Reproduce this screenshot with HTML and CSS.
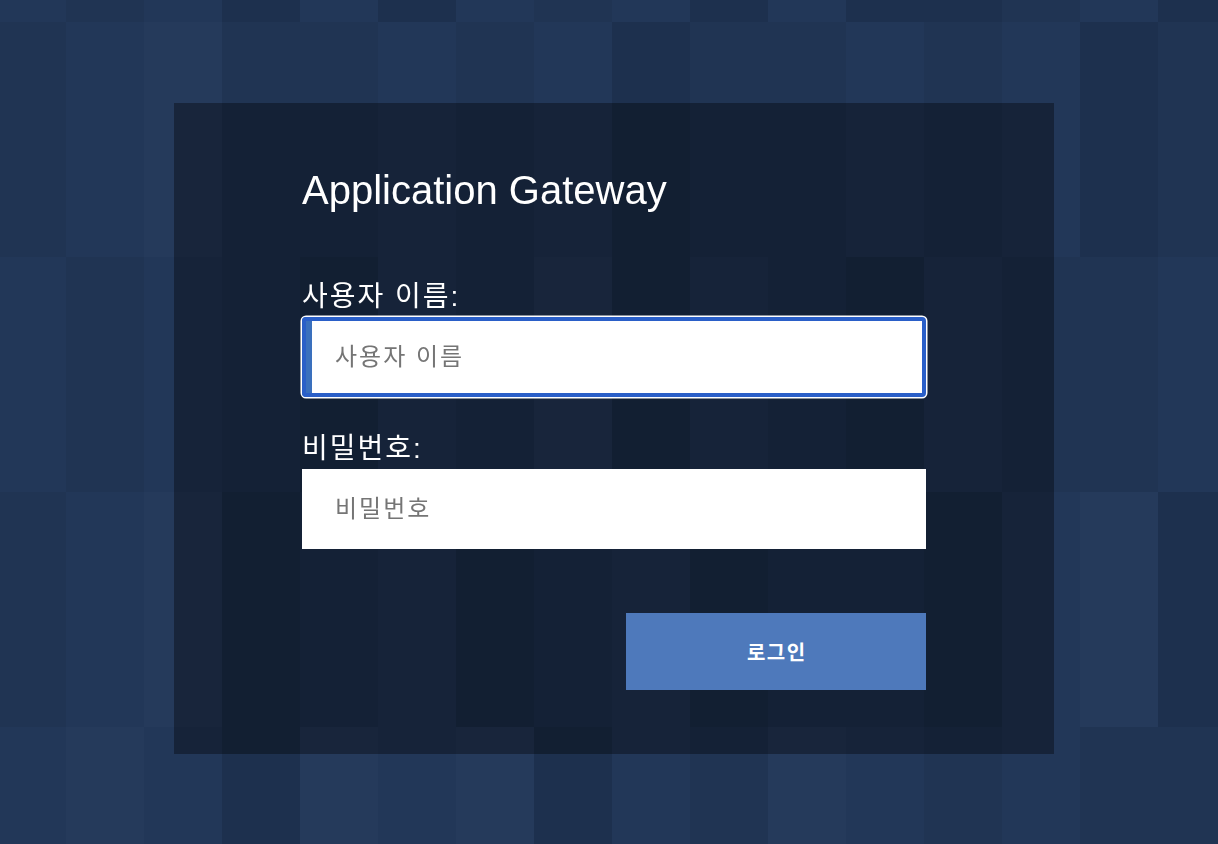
FILE: index.html
```html
<!DOCTYPE html>
<html lang="ko">
<head>
<meta charset="utf-8">
<title>Application Gateway</title>
<link rel="stylesheet" href="styles.css">
</head>
<body>
<div class="mosaic" aria-hidden="true">
  <div class="tile c"></div><div class="tile b"></div><div class="tile c"></div><div class="tile a"></div><div class="tile c"></div><div class="tile a"></div><div class="tile c"></div><div class="tile b"></div><div class="tile c"></div><div class="tile a"></div><div class="tile c"></div><div class="tile a"></div><div class="tile a"></div><div class="tile b"></div><div class="tile c"></div><div class="tile a"></div>
  <div class="tile b"></div><div class="tile c"></div><div class="tile d"></div><div class="tile b"></div><div class="tile b"></div><div class="tile c"></div><div class="tile b"></div><div class="tile c"></div><div class="tile a"></div><div class="tile b"></div><div class="tile b"></div><div class="tile c"></div><div class="tile b"></div><div class="tile c"></div><div class="tile a"></div><div class="tile b"></div>
  <div class="tile c"></div><div class="tile b"></div><div class="tile c"></div><div class="tile b"></div><div class="tile a"></div><div class="tile c"></div><div class="tile b"></div><div class="tile d"></div><div class="tile a"></div><div class="tile c"></div><div class="tile b"></div><div class="tile a"></div><div class="tile c"></div><div class="tile b"></div><div class="tile b"></div><div class="tile c"></div>
  <div class="tile b"></div><div class="tile c"></div><div class="tile d"></div><div class="tile a"></div><div class="tile b"></div><div class="tile c"></div><div class="tile a"></div><div class="tile b"></div><div class="tile c"></div><div class="tile a"></div><div class="tile b"></div><div class="tile b"></div><div class="tile a"></div><div class="tile c"></div><div class="tile d"></div><div class="tile a"></div>
  <div class="tile c"></div><div class="tile d"></div><div class="tile c"></div><div class="tile a"></div><div class="tile d"></div><div class="tile c"></div><div class="tile d"></div><div class="tile a"></div><div class="tile c"></div><div class="tile b"></div><div class="tile d"></div><div class="tile c"></div><div class="tile b"></div><div class="tile c"></div><div class="tile b"></div><div class="tile b"></div>
</div>

<main class="page">
  <form class="card" action="#" onsubmit="return false;">
    <h1 class="title">Application Gateway</h1>

    <div class="field">
      <label class="label" for="username">사용자 이름:</label>
      <input class="input is-focused" id="username" type="text" placeholder="사용자 이름">
    </div>

    <div class="field">
      <label class="label" for="password">비밀번호:</label>
      <input class="input" id="password" type="password" placeholder="비밀번호">
    </div>

    <div class="actions">
      <button class="btn" type="submit">로그인</button>
    </div>
  </form>
</main>
</body>
</html>
```

FILE: styles.css
```css
html, body {
  margin: 0;
  padding: 0;
  height: 100%;
  overflow: hidden;
}

body {
  background: #203453;
  font-family: "Liberation Sans", "Noto Sans CJK KR", sans-serif;
  color: #fff;
}

/* decorative tiled backdrop */
.mosaic {
  position: fixed;
  left: -12px;
  top: -213px;
  display: grid;
  grid-template-columns: repeat(16, 78px);
  grid-auto-rows: 235px;
  z-index: 0;
}

.tile.a { background: #1d304e; }
.tile.b { background: #203453; }
.tile.c { background: #223758; }
.tile.d { background: #253a5b; }

.page {
  position: relative;
  z-index: 1;
  padding: 103px 0 0 174px;
}

.card {
  box-sizing: border-box;
  width: 880px;
  padding: 63px 128px 64px;
  background: rgba(0, 0, 0, 0.35);
  display: flex;
  flex-direction: column;
}

.title {
  margin: 0 0 63px;
  font-size: 40px;
  line-height: 48px;
  font-weight: normal;
  color: #fff;
}

.field {
  display: flex;
  flex-direction: column;
}

.field + .field {
  margin-top: 32px;
}

.label {
  font-size: 28px;
  line-height: 34px;
  letter-spacing: 2px;
  padding-top: 3px;
  margin-bottom: 3px;
  color: #fff;
}

.input {
  box-sizing: border-box;
  width: 100%;
  height: 80px;
  margin: 0;
  border: 0;
  border-left: 10px solid #fff;
  padding: 0 0 0 23px;
  background: #fff;
  font-family: "Liberation Sans", "Noto Sans CJK KR", sans-serif;
  font-size: 24px;
  letter-spacing: 2px;
  color: #222;
  outline: none;
}

.input::placeholder {
  color: #757575;
}

.input.is-focused {
  border-left-color: #3a70bd;
  border-radius: 4px;
  outline: 4px solid #2a5fc8;
  outline-offset: -4px;
  box-shadow: 0 0 0 1.5px #fff;
}

.actions {
  display: flex;
  justify-content: flex-end;
  margin-top: 64px;
}

.btn {
  width: 300px;
  height: 77px;
  border: 0;
  background: #4e79bb;
  color: #fff;
  font-family: "Liberation Sans", "Noto Sans CJK KR", sans-serif;
  font-size: 20px;
  font-weight: bold;
  letter-spacing: 1.5px;
  text-indent: 1.5px;
  cursor: pointer;
}
```
